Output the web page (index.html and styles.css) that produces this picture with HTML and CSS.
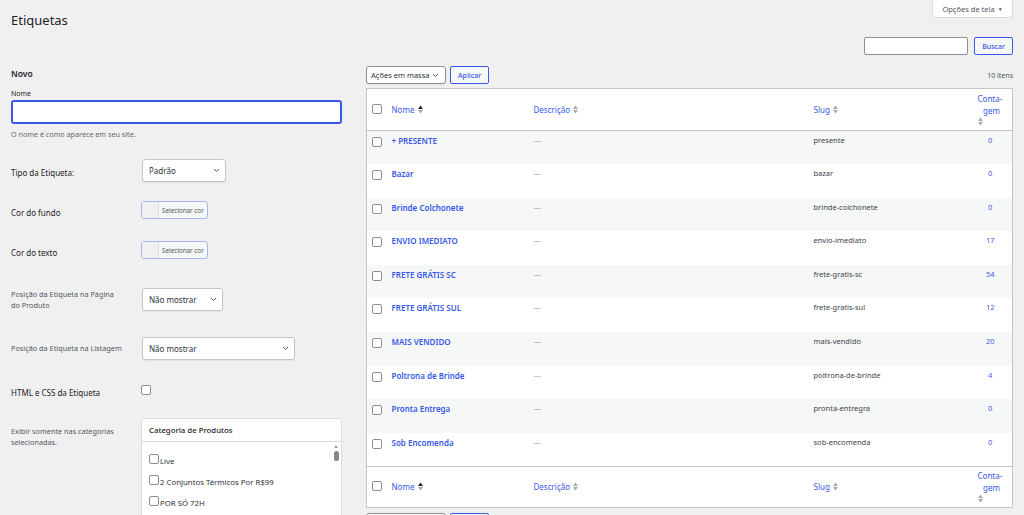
FILE: index.html
```html
<!DOCTYPE html>
<html lang="pt-BR">
<head>
    <meta charset="UTF-8">
    <meta name="viewport" content="width=device-width, initial-scale=1.0">
    <title>Etiquetas</title>
    <link rel="stylesheet" href="styles.css">
</head>
<body>
<div class="wrap">
    <div class="topbar">
        <h1>Etiquetas</h1>
        <div class="screen-opts">Opções de tela <span class="caret">&#9660;</span></div>
    </div>

    <div class="search-row">
        <div class="search-input"></div>
        <div class="btn">Buscar</div>
    </div>

    <div class="cols">
        <!-- formulario novo -->
        <div class="col-left">
            <h2>Novo</h2>
            <div class="lbl-nome">Nome</div>
            <div class="input-nome"></div>
            <p class="help">O nome é como aparece em seu site.</p>

            <div class="frow r-tipo">
                <div class="flabel">Tipo da Etiqueta:</div>
                <div class="select w-tipo"><span>Padrão</span><svg width="7" height="5" viewBox="0 0 7 5"><path d="M1 1l2.5 2.5L6 1" fill="none" stroke="#50575e" stroke-width="1"/></svg></div>
            </div>
            <div class="frow r-cor">
                <div class="flabel">Cor do fundo</div>
                <div class="color-btn"><span class="swatch"></span><span class="ctext">Selecionar cor</span></div>
            </div>
            <div class="frow r-cor">
                <div class="flabel">Cor do texto</div>
                <div class="color-btn"><span class="swatch"></span><span class="ctext">Selecionar cor</span></div>
            </div>
            <div class="frow r-pos">
                <div class="flabel small">Posição da Etiqueta na Página<br>do Produto</div>
                <div class="select w-pos"><span>Não mostrar</span><svg width="7" height="5" viewBox="0 0 7 5"><path d="M1 1l2.5 2.5L6 1" fill="none" stroke="#50575e" stroke-width="1"/></svg></div>
            </div>
            <div class="frow r-list">
                <div class="flabel small">Posição da Etiqueta na Listagem</div>
                <div class="select w-list"><span>Não mostrar</span><svg width="7" height="5" viewBox="0 0 7 5"><path d="M1 1l2.5 2.5L6 1" fill="none" stroke="#50575e" stroke-width="1"/></svg></div>
            </div>
            <div class="frow r-html">
                <div class="flabel">HTML e CSS da Etiqueta</div>
                <span class="cb"></span>
            </div>
            <div class="frow r-cat">
                <div class="flabel small">Exibir somente nas categorias<br>selecionadas.</div>
                <div class="catbox">
                    <div class="cat-head">Categoria de Produtos</div>
                    <div class="cat-body">
                        <ul class="cat-list">
                            <li><span class="cb"></span> Live</li>
                            <li><span class="cb"></span> 2 Conjuntos Térmicos Por R$99</li>
                            <li><span class="cb"></span> POR SÓ 72H</li>
                        </ul>
                        <div class="fake-scroll">
                            <span class="arrow"></span>
                            <span class="thumb"></span>
                        </div>
                    </div>
                </div>
            </div>
        </div>

        <!-- lista de etiquetas -->
        <div class="col-right">
            <div class="tablenav">
                <div class="select w-bulk"><span>Ações em massa</span><svg width="7" height="5" viewBox="0 0 7 5"><path d="M1 1l2.5 2.5L6 1" fill="none" stroke="#50575e" stroke-width="1"/></svg></div>
                <div class="btn">Aplicar</div>
                <div class="count-items">10 itens</div>
            </div>

            <table class="tags">
                <colgroup>
                    <col class="c-cb"><col class="c-name"><col class="c-desc"><col class="c-slug"><col class="c-count">
                </colgroup>
                <thead>
                    <tr>
                        <th class="check"><span class="cb"></span></th>
                        <th>Nome <svg class="sort" width="5" height="9" viewBox="0 0 5 9"><path d="M0 4L2.5 0.5 5 4z" fill="#1d2327"/><path d="M0 5L2.5 8.5 5 5z" fill="#a7aaad"/></svg></th>
                        <th>Descrição <svg class="sort" width="5" height="9" viewBox="0 0 5 9"><path d="M0 4L2.5 0.5 5 4z" fill="#a7aaad"/><path d="M0 5L2.5 8.5 5 5z" fill="#a7aaad"/></svg></th>
                        <th>Slug <svg class="sort" width="5" height="9" viewBox="0 0 5 9"><path d="M0 4L2.5 0.5 5 4z" fill="#a7aaad"/><path d="M0 5L2.5 8.5 5 5z" fill="#a7aaad"/></svg></th>
                        <th class="count"><span class="ctitle">Conta-<br>gem</span><svg class="sort" width="5" height="9" viewBox="0 0 5 9"><path d="M0 4L2.5 0.5 5 4z" fill="#a7aaad"/><path d="M0 5L2.5 8.5 5 5z" fill="#a7aaad"/></svg></th>
                    </tr>
                </thead>
                <tbody>
                    <tr><td class="check"><span class="cb"></span></td><td class="name">+ PRESENTE</td><td class="desc">—</td><td>presente</td><td class="num">0</td></tr>
                    <tr><td class="check"><span class="cb"></span></td><td class="name">Bazar</td><td class="desc">—</td><td>bazar</td><td class="num">0</td></tr>
                    <tr><td class="check"><span class="cb"></span></td><td class="name">Brinde Colchonete</td><td class="desc">—</td><td>brinde-colchonete</td><td class="num">0</td></tr>
                    <tr><td class="check"><span class="cb"></span></td><td class="name">ENVIO IMEDIATO</td><td class="desc">—</td><td>envio-imediato</td><td class="num">17</td></tr>
                    <tr><td class="check"><span class="cb"></span></td><td class="name">FRETE GRÁTIS SC</td><td class="desc">—</td><td>frete-gratis-sc</td><td class="num">54</td></tr>
                    <tr><td class="check"><span class="cb"></span></td><td class="name">FRETE GRÁTIS SUL</td><td class="desc">—</td><td>frete-gratis-sul</td><td class="num">12</td></tr>
                    <tr><td class="check"><span class="cb"></span></td><td class="name">MAIS VENDIDO</td><td class="desc">—</td><td>mais-vendido</td><td class="num">20</td></tr>
                    <tr><td class="check"><span class="cb"></span></td><td class="name">Poltrona de Brinde</td><td class="desc">—</td><td>poltrona-de-brinde</td><td class="num">4</td></tr>
                    <tr><td class="check"><span class="cb"></span></td><td class="name">Pronta Entrega</td><td class="desc">—</td><td>pronta-entregra</td><td class="num">0</td></tr>
                    <tr><td class="check"><span class="cb"></span></td><td class="name">Sob Encomenda</td><td class="desc">—</td><td>sob-encomenda</td><td class="num">0</td></tr>
                </tbody>
                <tfoot>
                    <tr>
                        <th class="check"><span class="cb"></span></th>
                        <th>Nome <svg class="sort" width="5" height="9" viewBox="0 0 5 9"><path d="M0 4L2.5 0.5 5 4z" fill="#1d2327"/><path d="M0 5L2.5 8.5 5 5z" fill="#a7aaad"/></svg></th>
                        <th>Descrição <svg class="sort" width="5" height="9" viewBox="0 0 5 9"><path d="M0 4L2.5 0.5 5 4z" fill="#a7aaad"/><path d="M0 5L2.5 8.5 5 5z" fill="#a7aaad"/></svg></th>
                        <th>Slug <svg class="sort" width="5" height="9" viewBox="0 0 5 9"><path d="M0 4L2.5 0.5 5 4z" fill="#a7aaad"/><path d="M0 5L2.5 8.5 5 5z" fill="#a7aaad"/></svg></th>
                        <th class="count"><span class="ctitle">Conta-<br>gem</span><svg class="sort" width="5" height="9" viewBox="0 0 5 9"><path d="M0 4L2.5 0.5 5 4z" fill="#a7aaad"/><path d="M0 5L2.5 8.5 5 5z" fill="#a7aaad"/></svg></th>
                    </tr>
                </tfoot>
            </table>

            <div class="tablenav bottom">
                <div class="select w-bulk"><span>Ações em massa</span><svg width="7" height="5" viewBox="0 0 7 5"><path d="M1 1l2.5 2.5L6 1" fill="none" stroke="#50575e" stroke-width="1"/></svg></div>
                <div class="btn">Aplicar</div>
            </div>
        </div>
    </div>
</div>
</body>
</html>
```

FILE: styles.css
```css
* {margin: 0; padding: 0; box-sizing: border-box;}
html, body {overflow: hidden; height: 100%;}
body {background: #f0f0f1; font-family: "Noto Sans", "Open Sans", sans-serif; font-size: 8px; color: #3c434a;}
.wrap {padding: 0 11px;}

/* topo */
.topbar {display: flex; justify-content: space-between; align-items: flex-start; height: 37px;}
.topbar h1 {font-size: 13px; font-weight: 400; line-height: 20px; margin-top: 10px; color: #1d2327;}
.screen-opts {
    height: 18px; width: 81px; background: #fff; border: 1px solid #dcdcde; border-top: 0;
    border-radius: 0 0 3px 3px; font-size: 7.5px; color: #50575e; display: flex; align-items: center; justify-content: center; gap: 3px;
}
.screen-opts .caret {font-size: 5px;}

.search-row {display: flex; justify-content: flex-end; gap: 6px; height: 18px;}
.search-input {width: 104px; height: 18px; background: #fff; border: 1px solid #8c8f94; border-radius: 2px;}
.btn {
    height: 18px; padding: 0 7px; border: 1px solid #3858e9; border-radius: 2px; background: #f6f7f7;
    color: #3858e9; font-size: 7px; font-weight: 500; display: flex; align-items: center;
}

.cols {display: flex; gap: 24px; margin-top: 8px;}

/* coluna esquerda */
.col-left {width: 331px; flex: none;}
.col-left h2 {font-size: 8.5px; font-weight: 600; line-height: 12px; margin-top: 5px; color: #1d2327;}
.lbl-nome {font-size: 7px; line-height: 10px; margin-top: 9px; color: #1d2327;}
.input-nome {height: 24px; margin-top: 1px; background: #fff; border: 2px solid #3858e9; border-radius: 3px;}
.help {font-size: 7.2px; line-height: 10px; margin-top: 5px; color: #646970;}

.frow {display: flex; align-items: center;}
.flabel {width: 130px; flex: none; font-size: 8px; line-height: 11px; color: #1d2327; padding-top: 4px;}
.flabel.small {font-size: 7.3px; color: #50575e; padding-top: 1px;}
.r-tipo {height: 40px; margin-top: 11px;}
.r-cor {height: 40px;}
.r-pos {height: 58px;}
.r-list {height: 40px;}
.r-html {height: 44px;}
.r-cat {align-items: flex-start;}
.r-cat .flabel {padding-top: 14px;}

.select {
    height: 23px; margin-left: 1px; background: #fff; border: 1px solid #c3c4c7; border-radius: 3px;
    display: flex; align-items: center; justify-content: space-between; padding: 0 5px 0 6px;
    font-size: 8px; color: #2c3338; box-shadow: 0 1px 1px rgba(0,0,0,0.06);
}
.w-tipo {width: 84px;}
.w-pos {width: 81px;}
.w-list {width: 153px;}
.w-bulk {width: 80px; height: 18px; margin-left: 0; padding: 0 4px; justify-content: flex-start; gap: 2px; font-size: 7.5px; border-color: #8c8f94;}

.color-btn {
    display: flex; width: 67px; height: 18px; border: 1px solid #a8b4f4; border-radius: 3px; overflow: hidden; background: #f6f7f7;
}
.color-btn .swatch {width: 17px; background: #f0f0f1; border-right: 1px solid #dcdcde;}
.color-btn .ctext {font-size: 6.3px; color: #50575e; display: flex; align-items: center; padding-left: 3px;}

.cb {display: inline-block; width: 10px; height: 10px; background: #fff; border: 1px solid #8c8f94; border-radius: 2px;}

.catbox {width: 211px; margin-top: 6px; background: #fff; border: 1px solid #dcdcde; border-radius: 4px 4px 0 0;}
.cat-head {height: 23px; border-bottom: 1px solid #dcdcde; padding: 0 7px; display: flex; align-items: center; font-size: 7.8px; font-weight: 500; color: #1d2327;}
.cat-body {display: flex; height: 100px;}
.cat-list {list-style: none; flex: 1; padding: 9px 0 0 7px; font-size: 7.8px; color: #2c3338;}
.cat-list li {line-height: 21px; height: 21px;}
.cat-list .cb {margin-right: -1px;}
.fake-scroll {width: 10px; display: flex; flex-direction: column; align-items: center; padding-top: 3px;}
.fake-scroll .arrow {width: 0; height: 0; border-left: 2.5px solid transparent; border-right: 2.5px solid transparent; border-bottom: 3px solid #a3a3a3;}
.fake-scroll .thumb {width: 5px; height: 10px; background: #858585; border-radius: 3px; margin-top: 3px;}

/* coluna direita */
.col-right {flex: 1; min-width: 0;}
.tablenav {display: flex; align-items: center; gap: 4px; margin-top: 3px; height: 18px;}
.tablenav .btn {font-weight: 500;}
.count-items {margin-left: auto; font-size: 7px; color: #50575e;}
.tablenav.bottom {margin-top: 5px;}

.tags {width: 100%; table-layout: fixed; border-collapse: collapse; background: #fff; border: 1px solid #c3c4c7; margin-top: 4px;}
.c-cb {width: 20px;} .c-name {width: 142px;} .c-desc {width: 280px;} .c-slug {width: 160px;}
.tags th {font-weight: 400; font-size: 8px; color: #3858e9; text-align: left; height: 42px; padding: 0 5px; vertical-align: middle;}
.tags thead th {border-bottom: 1px solid #c3c4c7;}
.tags tfoot th {border-top: 1px solid #c3c4c7; height: 41px;}
.tags .check {padding: 0 0 0 5px;}
.tags th .sort {vertical-align: -1px; margin-left: 1px;}
.tags th.count {padding: 0 12px 0 9px; text-align: right; line-height: 11.5px;}
.tags th.count .ctitle {display: block;}
.tags th.count .sort {display: block; margin: 1px 0 0;}
.tags td {height: 33.6px; padding: 4px 5px 0; vertical-align: top; font-size: 7.5px; line-height: 11px; color: #3c434a;}
.tags td.check {padding-top: 6px; padding-left: 5px;}
.tags td.name {color: #3858e9; font-weight: 600; font-size: 8px; padding-top: 4px;}
.tags td.desc {color: #a7aaad;}
.tags td.num {text-align: center; color: #3858e9; padding: 4px 0 0;}
.tags tbody tr:nth-child(odd) {background: #f6f7f7;}
```
